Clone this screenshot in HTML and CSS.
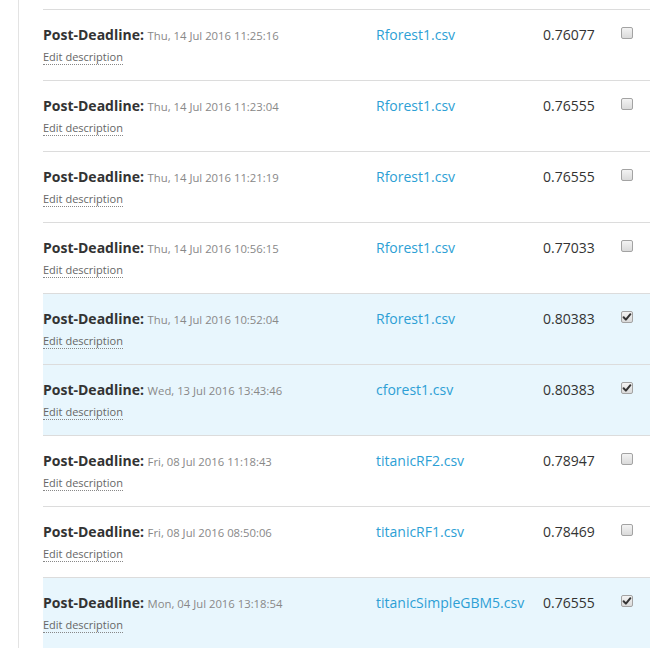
FILE: index.html
```html
<!DOCTYPE html>
<html>
<head>
<meta charset="utf-8">
<link rel="stylesheet" href="styles.css">
</head>
<body>
<div class="page">
  <div class="rail"></div>
  <div class="list">
    <div class="row">
      <div class="c-desc"><div class="title"><b>Post-Deadline:</b> <span class="date">Thu, 14 Jul 2016 11:25:16</span></div><div class="edit"><a>Edit description</a></div></div>
      <div class="c-file"><a>Rforest1.csv</a></div>
      <div class="c-score">0.76077</div>
      <div class="c-check"><span class="cb"></span></div>
    </div>
    <div class="row">
      <div class="c-desc"><div class="title"><b>Post-Deadline:</b> <span class="date">Thu, 14 Jul 2016 11:23:04</span></div><div class="edit"><a>Edit description</a></div></div>
      <div class="c-file"><a>Rforest1.csv</a></div>
      <div class="c-score">0.76555</div>
      <div class="c-check"><span class="cb"></span></div>
    </div>
    <div class="row">
      <div class="c-desc"><div class="title"><b>Post-Deadline:</b> <span class="date">Thu, 14 Jul 2016 11:21:19</span></div><div class="edit"><a>Edit description</a></div></div>
      <div class="c-file"><a>Rforest1.csv</a></div>
      <div class="c-score">0.76555</div>
      <div class="c-check"><span class="cb"></span></div>
    </div>
    <div class="row">
      <div class="c-desc"><div class="title"><b>Post-Deadline:</b> <span class="date">Thu, 14 Jul 2016 10:56:15</span></div><div class="edit"><a>Edit description</a></div></div>
      <div class="c-file"><a>Rforest1.csv</a></div>
      <div class="c-score">0.77033</div>
      <div class="c-check"><span class="cb"></span></div>
    </div>
    <div class="row selected">
      <div class="c-desc"><div class="title"><b>Post-Deadline:</b> <span class="date">Thu, 14 Jul 2016 10:52:04</span></div><div class="edit"><a>Edit description</a></div></div>
      <div class="c-file"><a>Rforest1.csv</a></div>
      <div class="c-score">0.80383</div>
      <div class="c-check"><span class="cb checked"><svg viewBox="0 0 10 10" width="10" height="10"><path d="M1.6 5.2 L3.9 7.6 L8.4 2.2" fill="none" stroke="#333" stroke-width="2" stroke-linecap="round" stroke-linejoin="round"/></svg></span></div>
    </div>
    <div class="row selected">
      <div class="c-desc"><div class="title"><b>Post-Deadline:</b> <span class="date">Wed, 13 Jul 2016 13:43:46</span></div><div class="edit"><a>Edit description</a></div></div>
      <div class="c-file"><a>cforest1.csv</a></div>
      <div class="c-score">0.80383</div>
      <div class="c-check"><span class="cb checked"><svg viewBox="0 0 10 10" width="10" height="10"><path d="M1.6 5.2 L3.9 7.6 L8.4 2.2" fill="none" stroke="#333" stroke-width="2" stroke-linecap="round" stroke-linejoin="round"/></svg></span></div>
    </div>
    <div class="row">
      <div class="c-desc"><div class="title"><b>Post-Deadline:</b> <span class="date">Fri, 08 Jul 2016 11:18:43</span></div><div class="edit"><a>Edit description</a></div></div>
      <div class="c-file"><a>titanicRF2.csv</a></div>
      <div class="c-score">0.78947</div>
      <div class="c-check"><span class="cb"></span></div>
    </div>
    <div class="row">
      <div class="c-desc"><div class="title"><b>Post-Deadline:</b> <span class="date">Fri, 08 Jul 2016 08:50:06</span></div><div class="edit"><a>Edit description</a></div></div>
      <div class="c-file"><a>titanicRF1.csv</a></div>
      <div class="c-score">0.78469</div>
      <div class="c-check"><span class="cb"></span></div>
    </div>
    <div class="row selected">
      <div class="c-desc"><div class="title"><b>Post-Deadline:</b> <span class="date">Mon, 04 Jul 2016 13:18:54</span></div><div class="edit"><a>Edit description</a></div></div>
      <div class="c-file"><a>titanicSimpleGBM5.csv</a></div>
      <div class="c-score">0.76555</div>
      <div class="c-check"><span class="cb checked"><svg viewBox="0 0 10 10" width="10" height="10"><path d="M1.6 5.2 L3.9 7.6 L8.4 2.2" fill="none" stroke="#333" stroke-width="2" stroke-linecap="round" stroke-linejoin="round"/></svg></span></div>
    </div>
  </div>
</div>
</body>
</html>
```

FILE: styles.css
```css
html, body {
  margin: 0;
  padding: 0;
  background: #fff;
  overflow: hidden;
}
body {
  font-family: "Open Sans", "Liberation Sans", sans-serif;
  color: #333;
  width: 650px;
  height: 648px;
}
.page {
  display: flex;
  height: 648px;
  padding-left: 18px;
  overflow: hidden;
}
.rail {
  width: 1px;
  flex: none;
  background: #e3e3e3;
  height: 100%;
}
.list {
  margin-left: 24px;
  padding-top: 9px;
  flex: none;
  width: 640px;
}
.row {
  display: grid;
  grid-template-columns: 333px 167px 78px 62px;
  height: 70px;
  border-top: 1px solid #dcdcdc;
  align-items: start;
}
.row.selected {
  background: #e8f6fd;
}
.c-desc {
  padding-top: 15px;
}
.title {
  font-size: 14px;
  line-height: 20px;
  white-space: nowrap;
}
.title b {
  font-weight: 700;
  color: #333;
}
.date {
  font-size: 11.3px;
  color: #888;
}
.edit {
  margin-top: 3px;
  font-size: 11px;
  line-height: 16px;
}
.edit a {
  color: #666;
  border-bottom: 1px dotted #888;
}
.c-file {
  padding-top: 15px;
  font-size: 14px;
  line-height: 20px;
  white-space: nowrap;
}
.c-file a {
  color: #2d9fd5;
}
.c-score {
  padding-top: 15px;
  font-size: 14px;
  line-height: 20px;
  color: #333;
}
.c-check {
  padding-top: 17px;
}
.cb {
  display: flex;
  align-items: center;
  justify-content: center;
  box-sizing: border-box;
  width: 12px;
  height: 12px;
  border: 1px solid #a3a3a3;
  border-radius: 2px;
  background: linear-gradient(#f3f3f3, #dadada);
}
```
